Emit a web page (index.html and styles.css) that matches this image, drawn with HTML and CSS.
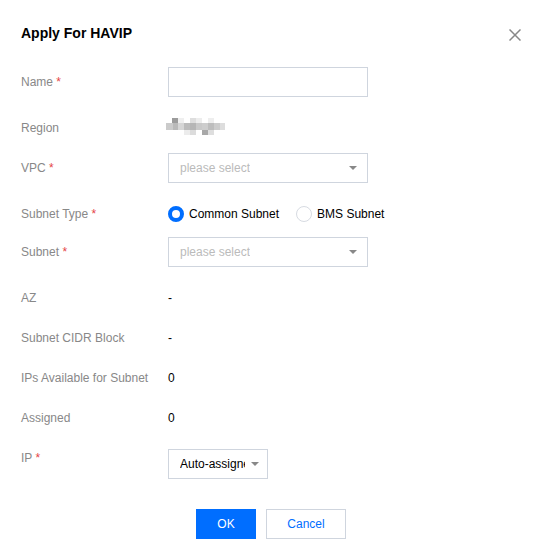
FILE: index.html
```html
<!DOCTYPE html>
<html lang="en">
<head>
<meta charset="utf-8">
<title>Apply For HAVIP</title>
<link rel="stylesheet" href="styles.css">
</head>
<body>
<div class="dialog">
  <header class="dialog-head">
    <h2 class="dialog-title">Apply For HAVIP</h2>
    <button class="dialog-close" type="button" aria-label="Close">
      <svg width="12" height="12" viewBox="0 0 12 12"><path d="M0.5 0.5 L11.5 11.5 M11.5 0.5 L0.5 11.5" stroke="#888" stroke-width="1.5" fill="none"/></svg>
    </button>
  </header>

  <form class="form">
    <div class="row">
      <div class="label">Name <span class="req">*</span></div>
      <div class="ctrl"><input class="input" type="text"></div>
    </div>

    <div class="row">
      <div class="label">Region</div>
      <div class="ctrl ctrl-text">
        <svg class="masked" width="62" height="18" viewBox="0 0 62 18">
          <rect x="6" y="0" width="6" height="5" fill="#9c9c9c"/>
          <rect x="12" y="0" width="6" height="5" fill="#efefef"/>
          <rect x="24" y="0" width="6" height="5" fill="#dedede"/>
          <rect x="30" y="0" width="6" height="5" fill="#ededed"/>
          <rect x="42" y="0" width="6" height="5" fill="#eeeeee"/>
          <rect x="0" y="5" width="7" height="7" fill="#cbcbcb"/>
          <rect x="7" y="5" width="5" height="7" fill="#b9b9b9"/>
          <rect x="12" y="5" width="6" height="7" fill="#d6d6d6"/>
          <rect x="18" y="5" width="6" height="7" fill="#bcbcbc"/>
          <rect x="24" y="5" width="6" height="7" fill="#b6b6b6"/>
          <rect x="30" y="5" width="6" height="7" fill="#c9c9c9"/>
          <rect x="36" y="5" width="6" height="7" fill="#cdcdcd"/>
          <rect x="42" y="5" width="6" height="7" fill="#bdbdbd"/>
          <rect x="48" y="5" width="6" height="7" fill="#cccccc"/>
          <rect x="54" y="5" width="5" height="7" fill="#dddddd"/>
          <rect x="18" y="12" width="6" height="5" fill="#ececec"/>
          <rect x="24" y="12" width="6" height="5" fill="#dcdcdc"/>
          <rect x="36" y="12" width="6" height="5" fill="#a8a8a8"/>
          <rect x="42" y="12" width="6" height="5" fill="#dedede"/>
        </svg>
      </div>
    </div>

    <div class="row">
      <div class="label">VPC <span class="req">*</span></div>
      <div class="ctrl">
        <div class="select"><span class="select-text placeholder">please select</span><i class="caret"></i></div>
      </div>
    </div>

    <div class="row row-radio">
      <div class="label">Subnet Type <span class="req">*</span></div>
      <div class="ctrl ctrl-text radios">
        <label class="radio"><span class="radio-dot checked"></span>Common Subnet</label>
        <label class="radio"><span class="radio-dot"></span>BMS Subnet</label>
      </div>
    </div>

    <div class="row">
      <div class="label">Subnet <span class="req">*</span></div>
      <div class="ctrl">
        <div class="select"><span class="select-text placeholder">please select</span><i class="caret"></i></div>
      </div>
    </div>

    <div class="row">
      <div class="label">AZ</div>
      <div class="ctrl ctrl-text">-</div>
    </div>

    <div class="row">
      <div class="label">Subnet CIDR Block</div>
      <div class="ctrl ctrl-text">-</div>
    </div>

    <div class="row">
      <div class="label">IPs Available for Subnet</div>
      <div class="ctrl ctrl-text">0</div>
    </div>

    <div class="row">
      <div class="label">Assigned</div>
      <div class="ctrl ctrl-text">0</div>
    </div>

    <div class="row row-last">
      <div class="label">IP <span class="req">*</span></div>
      <div class="ctrl ctrl-offset">
        <div class="select select-sm"><span class="select-text">Auto-assigned</span><i class="caret"></i></div>
      </div>
    </div>
  </form>

  <footer class="dialog-foot">
    <button class="btn btn-primary" type="button">OK</button>
    <button class="btn btn-weak" type="button">Cancel</button>
  </footer>
</div>
</body>
</html>
```

FILE: styles.css
```css
* {
  box-sizing: border-box;
}

html,
body {
  margin: 0;
  background: #fff;
}

body {
  font-family: "Liberation Sans", Arial, sans-serif;
  font-size: 12px;
  color: #000;
}

.dialog {
  width: 542px;
  padding: 23px 20px 19px 20px;
}

.dialog-head {
  display: flex;
  justify-content: space-between;
  align-items: flex-start;
}

.dialog-title {
  margin: 0;
  font-size: 14px;
  line-height: 20px;
  font-weight: bold;
  color: #000;
  padding-left: 1px;
}

.dialog-close {
  margin: 6px 1px 0 0;
  padding: 0;
  border: 0;
  background: none;
  width: 12px;
  height: 12px;
  display: block;
  cursor: pointer;
}

.dialog-close svg {
  display: block;
}

.form {
  margin-top: 24px;
}

.row {
  display: flex;
  margin-bottom: 16px;
}

.row-radio {
  margin-bottom: 14px;
}

.row-last {
  margin-bottom: 0;
}

.label {
  width: 148px;
  flex: none;
  padding: 6px 0 0 1px;
  line-height: 18px;
  color: #888;
}

.req {
  color: #e54545;
}

.ctrl {
  flex: 1;
}

.ctrl-text {
  padding-top: 6px;
  line-height: 18px;
  color: #000;
}

.ctrl-offset {
  padding-top: 6px;
}

.masked {
  display: block;
  margin: -1px 0 0 -2px;
}

.input {
  display: block;
  width: 200px;
  height: 30px;
  margin: 0;
  border: 1px solid #cfd5de;
  border-radius: 0;
  padding: 0 10px;
  font: inherit;
  outline: none;
}

.select {
  position: relative;
  display: flex;
  align-items: center;
  width: 200px;
  height: 30px;
  border: 1px solid #cfd5de;
  padding: 0 24px 0 11px;
  background: #fff;
}

.select-sm {
  width: 100px;
  padding: 0 22px 0 11px;
}

.select-text {
  display: block;
  overflow: hidden;
  white-space: nowrap;
  color: #000;
}

.placeholder {
  color: #bbb;
}

.caret {
  position: absolute;
  right: 10px;
  top: 12px;
  width: 0;
  height: 0;
  border-left: 4px solid transparent;
  border-right: 4px solid transparent;
  border-top: 4px solid #888;
}

.select-sm .caret {
  right: 8px;
}

.radios {
  display: flex;
  gap: 17px;
}

.radio {
  display: inline-flex;
  align-items: center;
  gap: 5px;
  height: 18px;
}

.radio-dot {
  width: 16px;
  height: 16px;
  border-radius: 50%;
  border: 1px solid #d7dbe2;
  background: #fff;
  flex: none;
}

.radio-dot.checked {
  border: 4px solid #006eff;
}

.dialog-foot {
  display: flex;
  justify-content: center;
  gap: 10px;
  margin-top: 30px;
}

.btn {
  height: 30px;
  margin: 0;
  padding: 0;
  font: inherit;
  font-size: 12px;
  cursor: pointer;
  border-radius: 0;
}

.btn-primary {
  width: 60px;
  background: #006eff;
  border: 1px solid #006eff;
  color: #fff;
}

.btn-weak {
  width: 80px;
  background: #fff;
  border: 1px solid #cfd5de;
  color: #006eff;
}
```
